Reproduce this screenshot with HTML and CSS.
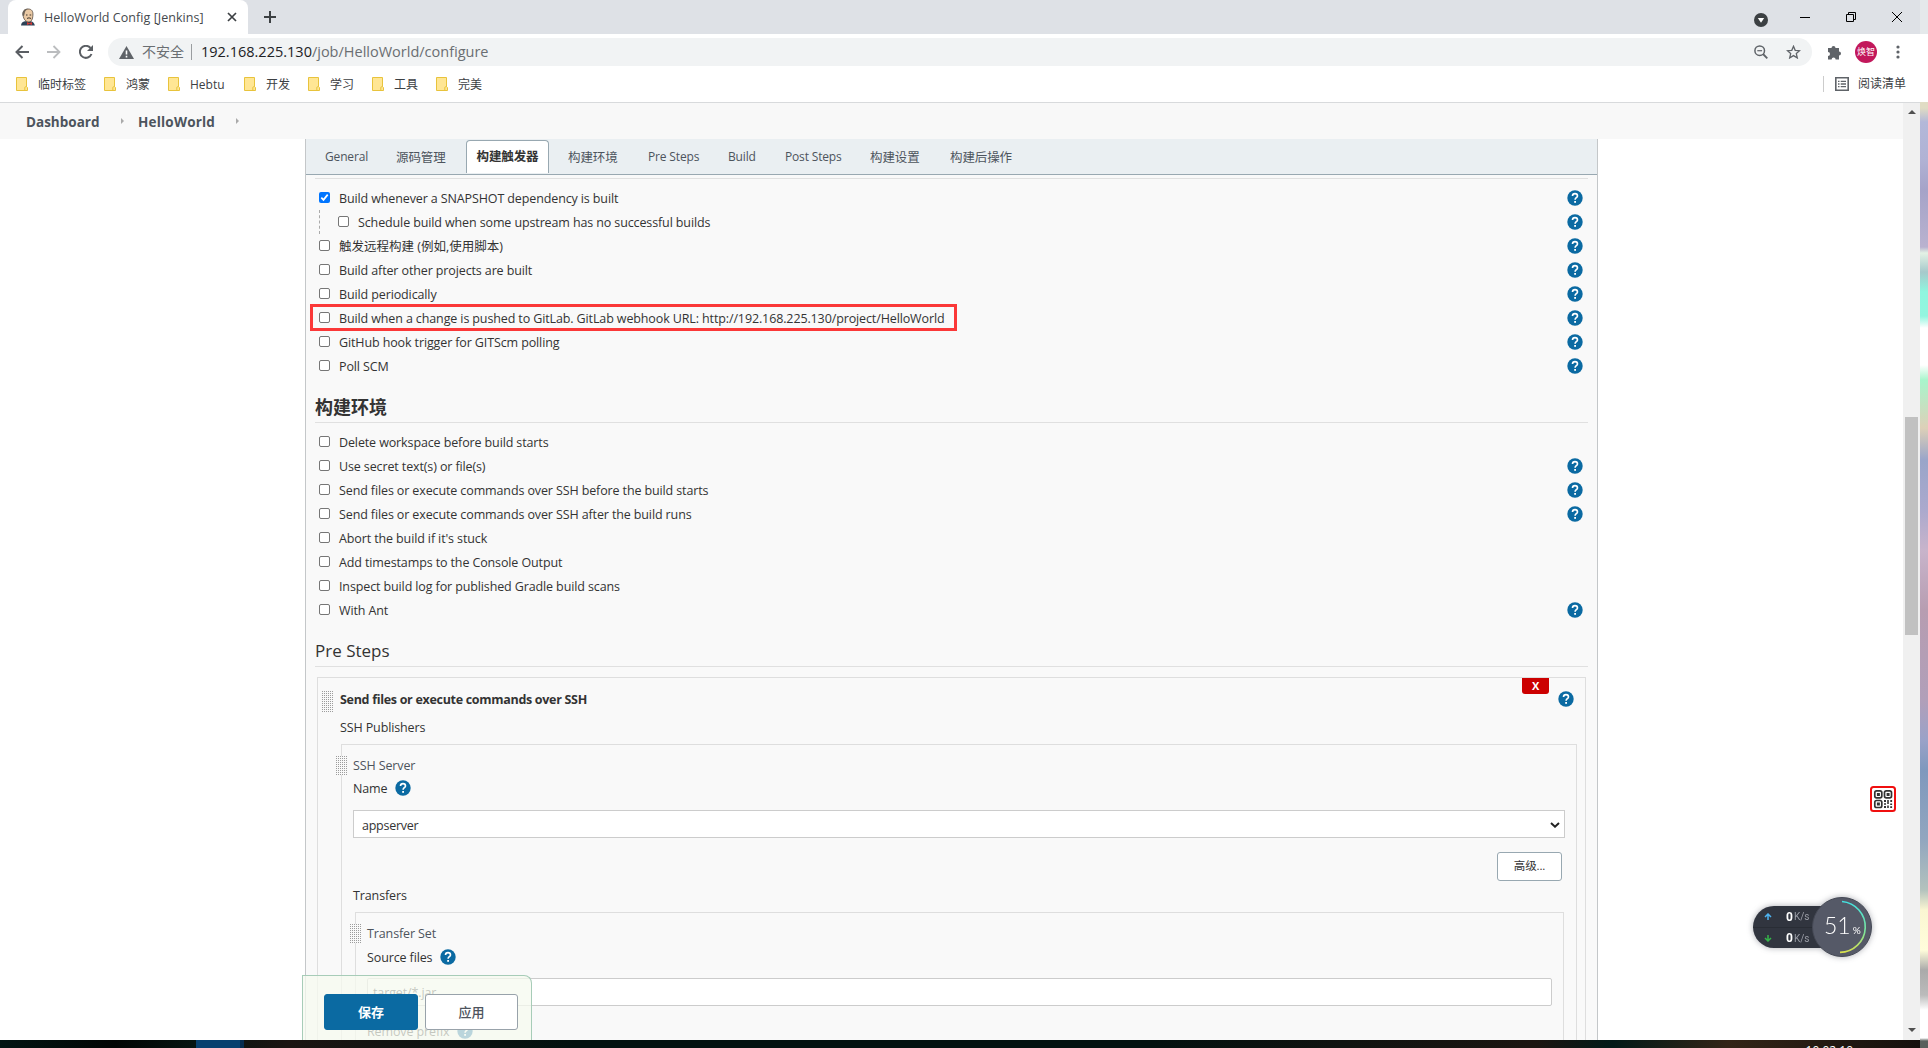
FILE: index.html
```html
<!DOCTYPE html>
<html lang="zh-CN">
<head>
    <meta charset="UTF-8">
    <title>HelloWorld Config [Jenkins]</title>
    <link rel="stylesheet" href="styles.css">
</head>
<body>

    <!-- shared icons -->
    <svg class="defs" width="0" height="0">
        <symbol id="help" viewBox="0 0 16 16">
            <circle cx="8" cy="8" r="7.7" fill="#0b6aa2"/>
            <path d="M5.5 6.1C5.5 4.6 6.6 3.6 8 3.6s2.5.9 2.5 2.3c0 1.8-2.4 1.9-2.4 3.8" fill="none" stroke="#fff" stroke-width="1.6"/>
            <rect x="7.2" y="11" width="1.8" height="1.8" fill="#fff"/>
        </symbol>
        <symbol id="folder" viewBox="0 0 12 14">
            <path d="M.5.5h10v9.2l1 .8v3H.5z" fill="#ffe694" stroke="#e8c33c"/>
            <path d="M8.8 13.3v-3l1.7-1" fill="none" stroke="#e8c33c"/>
        </symbol>
    </svg>

    <div class="window">
        <div class="tabstrip">
            <div class="browser-tab">
                <svg class="favicon" width="16" height="18" viewBox="0 0 16 18">
                    <path d="M1 17.500c.2-3 1.600-4 4-4.300h6c2 .5 3.500 1.800 3.800 4.300z" fill="#2d4257"/>
                    <path d="M3 7C2.600 3 4.600 1 8 1c3.800 0 5.200 2.300 4.900 6.200-.2 4-1.500 6.600-4 6.800C5.800 14 3.600 11.500 3 7z" fill="#eac9a4" stroke="#54483e" stroke-width=".8"/>
                    <path d="M2.600 7.500C2 3.500 4 .7 8 .7 6 2 5 3 4.700 5.300L4 8z" fill="#6b6259"/>
                    <path d="M6 7h1.500M9.600 7h1.600M7 10.500c1.300-.8 2.600-.8 4 0" stroke="#3c342e" fill="none"/>
                    <path d="M7 14l2.300 1.200L12 14v3l-2.700-1L7 17z" fill="#d33833"/>
                </svg>
                <span class="tab-title">HelloWorld Config [Jenkins]</span>
                <svg width="10" height="10" viewBox="0 0 10 10"><path d="M1 1l8 8M9 1L1 9" stroke="#3c4043" stroke-width="1.700"/></svg>
            </div>
            <svg class="new-tab" width="12" height="12" viewBox="0 0 12 12"><path d="M6 0v12M0 6h12" stroke="#3c4043" stroke-width="2"/></svg>
            <div class="window-buttons">
                <svg class="down-badge" width="14" height="14" viewBox="0 0 14 14"><circle cx="7" cy="7" r="7" fill="#3c4043"/><path d="M3.800 5h6.400L7 9.800z" fill="#fff"/></svg>
                <svg width="10" height="10" viewBox="0 0 10 10"><path d="M0 5.500h10" stroke="#000"/></svg>
                <svg width="10" height="10" viewBox="0 0 10 10"><path d="M.5 2.500h7v7h-7zM2.500 2.500v-2h7v7h-2" fill="none" stroke="#000"/></svg>
                <svg width="10" height="10" viewBox="0 0 10 10"><path d="M0 0l10 10M10 0L0 10" stroke="#000"/></svg>
            </div>
        </div>

        <div class="toolbar">
            <div class="nav">
                <svg width="14" height="14" viewBox="0 0 14 14"><path d="M14 7H1.500M7.500 1L1.500 7l6 6" fill="none" stroke="#5a5e63" stroke-width="2"/></svg>
                <svg width="14" height="14" viewBox="0 0 14 14"><path d="M0 7h12.500M6.500 1l6 6-6 6" fill="none" stroke="#bbbdbf" stroke-width="1.800"/></svg>
                <svg width="14" height="14" viewBox="0 0 14 14"><path d="M12.500 9A6 6 0 1 1 11.500 3" fill="none" stroke="#5a5e63" stroke-width="2"/><path d="M14 0v6H8z" fill="#5a5e63"/></svg>
            </div>
            <div class="address">
                <svg width="15" height="13" viewBox="0 0 15 13"><path d="M7.500 0L15 13H0z" fill="#5f6368"/><path d="M7.500 4.500v4M7.500 9.800v1.600" stroke="#fff" stroke-width="1.600"/></svg>
                <span class="insecure">不安全</span>
                <span class="url"><b>192.168.225.130</b>/job/HelloWorld/configure</span>
                <svg class="magnifier" width="14" height="14" viewBox="0 0 14 14"><circle cx="5.700" cy="5.700" r="4.800" fill="none" stroke="#5f6368" stroke-width="1.500"/><path d="M3.300 5.700h4.800" stroke="#5f6368" stroke-width="1.200"/><path d="M9 9l4.300 4.300" stroke="#5f6368" stroke-width="1.800"/></svg>
                <svg width="15" height="14" viewBox="0 0 15 14"><path d="M7.500 1.300l1.700 4 4.400.4-3.300 2.900 1 4.300-3.800-2.300-3.800 2.300 1-4.300L1.400 5.700l4.400-.4z" fill="none" stroke="#5f6368" stroke-width="1.300"/></svg>
            </div>
            <svg class="puzzle" width="15" height="15" viewBox="0 0 15 15"><path d="M1 3h3.500a2 2 0 0 1 4 0H12v3.500a2 2 0 0 1 0 4V14.500H8.600a2 2 0 0 0-4 0H1V11a2 2 0 0 0 0-4z" fill="#5f6368"/></svg>
            <span class="avatar">焕智</span>
            <svg width="4" height="14" viewBox="0 0 4 14"><g fill="#5f6368"><circle cx="2" cy="2" r="1.600"/><circle cx="2" cy="7" r="1.600"/><circle cx="2" cy="12" r="1.600"/></g></svg>
        </div>

        <div class="bookmarks">
            <span class="bookmark w1"><svg width="12" height="14"><use href="#folder"/></svg>临时标签</span>
            <span class="bookmark"><svg width="12" height="14"><use href="#folder"/></svg>鸿蒙</span>
            <span class="bookmark w2"><svg width="12" height="14"><use href="#folder"/></svg>Hebtu</span>
            <span class="bookmark"><svg width="12" height="14"><use href="#folder"/></svg>开发</span>
            <span class="bookmark"><svg width="12" height="14"><use href="#folder"/></svg>学习</span>
            <span class="bookmark"><svg width="12" height="14"><use href="#folder"/></svg>工具</span>
            <span class="bookmark"><svg width="12" height="14"><use href="#folder"/></svg>完美</span>
            <span class="reading-list">
                <svg width="14" height="14" viewBox="0 0 14 14"><path d="M.8.8h12.400v12.400H.8z" fill="none" stroke="#5f6368" stroke-width="1.600"/><path d="M3 4.300h1.500M3 7h1.500M3 9.700h1.500M5.700 4.300H11M5.700 7H11M5.700 9.700H11" stroke="#5f6368" stroke-width="1.300"/></svg>
                阅读清单
            </span>
        </div>

        <div class="viewport">
            <div class="page">
                <div class="breadcrumbs">
                    <span class="crumb c1">Dashboard</span><i class="arrow"></i>
                    <span class="crumb c2">HelloWorld</span><i class="arrow"></i>
                </div>

                <div class="config">
                    <div class="tabs">
                        <span class="tab t1">General</span>
                        <span class="tab t2">源码管理</span>
                        <span class="tab active">构建触发器</span>
                        <span class="tab t4">构建环境</span>
                        <span class="tab t5">Pre Steps</span>
                        <span class="tab t6">Build</span>
                        <span class="tab t7">Post Steps</span>
                        <span class="tab t8">构建设置</span>
                        <span class="tab">构建后操作</span>
                    </div>
                    <div class="rule"></div>

                    <div class="rows">
                        <div class="row"><i class="check on"><svg width="11" height="11" viewBox="0 0 11 11"><path d="M2.300 5.600l2.200 2.300 4.200-5.300" fill="none" stroke="#fff" stroke-width="1.700"/></svg></i><span>Build whenever a SNAPSHOT dependency is built</span><svg class="help"><use href="#help"/></svg></div>
                        <div class="row nested"><i class="check"></i><span>Schedule build when some upstream has no successful builds</span><svg class="help"><use href="#help"/></svg></div>
                        <div class="row"><i class="check"></i><span class="cjk">触发远程构建 (例如,使用脚本)</span><svg class="help"><use href="#help"/></svg></div>
                        <div class="row"><i class="check"></i><span>Build after other projects are built</span><svg class="help"><use href="#help"/></svg></div>
                        <div class="row"><i class="check"></i><span>Build periodically</span><svg class="help"><use href="#help"/></svg></div>
                        <div class="row marked"><i class="check"></i><span>Build when a change is pushed to GitLab. GitLab webhook URL: http://192.168.225.130/project/HelloWorld</span><svg class="help"><use href="#help"/></svg></div>
                        <div class="row"><i class="check"></i><span>GitHub hook trigger for GITScm polling</span><svg class="help"><use href="#help"/></svg></div>
                        <div class="row"><i class="check"></i><span>Poll SCM</span><svg class="help"><use href="#help"/></svg></div>
                    </div>

                    <h2 class="cjk-title">构建环境</h2>
                    <div class="rows">
                        <div class="row"><i class="check"></i><span>Delete workspace before build starts</span></div>
                        <div class="row"><i class="check"></i><span>Use secret text(s) or file(s)</span><svg class="help"><use href="#help"/></svg></div>
                        <div class="row"><i class="check"></i><span>Send files or execute commands over SSH before the build starts</span><svg class="help"><use href="#help"/></svg></div>
                        <div class="row"><i class="check"></i><span>Send files or execute commands over SSH after the build runs</span><svg class="help"><use href="#help"/></svg></div>
                        <div class="row"><i class="check"></i><span>Abort the build if it's stuck</span></div>
                        <div class="row"><i class="check"></i><span>Add timestamps to the Console Output</span></div>
                        <div class="row"><i class="check"></i><span>Inspect build log for published Gradle build scans</span></div>
                        <div class="row"><i class="check"></i><span>With Ant</span><svg class="help"><use href="#help"/></svg></div>
                    </div>

                    <h2>Pre Steps</h2>
                    <div class="chunk step">
                        <i class="grip"></i>
                        <span class="delete">X</span>
                        <div class="step-title">Send files or execute commands over SSH<svg class="help"><use href="#help"/></svg></div>
                        <div class="label publishers">SSH Publishers</div>
                        <div class="chunk server">
                            <i class="grip"></i>
                            <div class="label light">SSH Server</div>
                            <div class="label name">Name<svg class="help"><use href="#help"/></svg></div>
                            <div class="select">appserver<svg width="10" height="6" viewBox="0 0 10 6"><path d="M1 1l4 3.700L9 1" fill="none" stroke="#222" stroke-width="2"/></svg></div>
                            <div class="advanced">高级...</div>
                            <div class="label transfers">Transfers</div>
                            <div class="chunk transfer">
                                <i class="grip"></i>
                                <div class="label light">Transfer Set</div>
                                <div class="label source">Source files<svg class="help"><use href="#help"/></svg></div>
                                <div class="input">target/*.jar</div>
                                <div class="label">Remove prefix<svg class="help"><use href="#help"/></svg></div>
                            </div>
                        </div>
                    </div>
                </div>

                <div class="save-bar">
                    <span class="button primary">保存</span>
                    <span class="button">应用</span>
                </div>
            </div>
            <div class="scrollbar">
                <i class="up"></i>
                <i class="thumb"></i>
                <i class="down"></i>
            </div>
        </div>
        <div class="taskbar"><i class="task"></i><span class="clock">10:02:10</span></div>
    </div>
    <div class="wallpaper"></div>

    <!-- floating desktop widgets -->
    <svg class="qr" width="26" height="26" viewBox="0 0 26 26">
        <rect x="1" y="1" width="24" height="24" rx="2.500" fill="#fff" stroke="#f00f0f" stroke-width="2"/>
        <g fill="none" stroke="#333" stroke-width="1.700">
            <rect x="4.800" y="4.800" width="7" height="7" rx="1.800"/><rect x="14.500" y="4.800" width="7" height="7" rx="1.800"/><rect x="4.800" y="14.500" width="7" height="7" rx="1.800"/>
        </g>
        <path d="M6.900 6.900h3v3h-3zM16.600 6.900h3v3h-3zM6.900 16.600h3v3h-3zM14 14h2v2h-2zM17.200 14h1.600v4h-1.600zM20.300 14h1.800v2h-1.800zM14 17.200h2v1.600h-2zM20.200 17.400h1.900v1.500h-1.900zM14 20h2v2h-2zM17.200 19.500h1.600v2.500h-1.600zM20.200 20.200h1.900v1.800h-1.900z" fill="#333"/>
    </svg>

    <div class="meter">
        <div class="speeds">
            <div class="speed"><svg width="8" height="7" viewBox="0 0 8 7"><path d="M4 7V1.500M1 4l3-3 3 3" fill="none" stroke="#4db3f0" stroke-width="1.500"/></svg><b>0</b>K/s</div>
            <div class="speed"><svg width="8" height="7" viewBox="0 0 8 7"><path d="M4 0v5.500M1 3l3 3 3-3" fill="none" stroke="#35b54a" stroke-width="1.500"/></svg><b>0</b>K/s</div>
        </div>
        <div class="gauge">
            <svg class="ring" width="60" height="60" viewBox="0 0 60 60">
                <defs><linearGradient id="arc" x1="0" y1="0" x2="0" y2="1"><stop offset="0" stop-color="#43e0e0"/><stop offset=".6" stop-color="#7fe59a"/><stop offset="1" stop-color="#d8e04e"/></linearGradient></defs>
                <path d="M30 4.500a25.500 25.500 0 0 1-2 50.900" fill="none" stroke="url(#arc)" stroke-width="1.600"/>
            </svg>
            <span class="percent">51</span><small>%</small>
        </div>
    </div>

</body>
</html>
```
FILE: styles.css
```css
* { box-sizing: border-box; }
body {
    margin: 0;
    width: 1928px;
    height: 1048px;
    display: flex;
    overflow: hidden;
    position: relative;
    background: white;
    color: #333;
    font-family: "Open Sans", "Noto Sans CJK SC", sans-serif;
    font-size: 12.5px;
    white-space: nowrap;
}
svg { flex: none; display: block; }
.defs { position: absolute; }
.window { width: 1920px; display: flex; flex-direction: column; }

/* Browser chrome */
.tabstrip {
    height: 34px;
    display: flex;
    align-items: center;
    padding-left: 8px;
    background: #dee1e6;
}
.browser-tab {
    width: 240px;
    height: 34px;
    display: flex;
    align-items: center;
    padding: 0 11px 0 12px;
    background: white;
    border-radius: 8px 8px 0 0;
    color: #45494d;
    font-size: 12.5px;
}
.tab-title { flex: 1; margin-left: 8px; letter-spacing: 0.05px; }
.new-tab { margin-left: 16px; }
.window-buttons {
    height: 28px;
    margin-left: auto;
    display: flex;
    align-items: center;
    gap: 36px;
    padding-right: 18px;
}
.down-badge { margin: 6px -4px 0 0; }
.toolbar {
    height: 36px;
    display: flex;
    align-items: center;
    padding: 0 20px 0 15px;
}
.nav { width: 93px; display: flex; gap: 18px; }
.address {
    width: 1704px;
    height: 28px;
    display: flex;
    align-items: center;
    padding: 0 11px;
    background: #f1f3f4;
    border-radius: 14px;
    font-size: 14px;
    color: #6a6e72;
}
.insecure { margin: 0 9px 0 8px; border-right: 1px solid #9a9da0; padding-right: 7px; line-height: 16px; }
.url { font-size: 14.5px; margin-bottom: 2px; }
.url b { font-weight: normal; color: #202124; }
.magnifier { margin: 0 18px 0 auto; }
.puzzle { margin-left: 15px; }
.avatar {
    width: 22px;
    height: 22px;
    margin: 0 19px 0 13px;
    border-radius: 50%;
    background: #c2185b;
    color: white;
    font-size: 9px;
    line-height: 22px;
    text-align: center;
}
.bookmarks {
    height: 33px;
    display: flex;
    align-items: center;
    padding: 0 14px 4px 16px;
    border-bottom: 1px solid #d8dadc;
    font-size: 12px;
    color: #3c4043;
}
.bookmark { width: 64px; display: flex; align-items: center; gap: 10px; }
.w1 { width: 88px; }
.w2 { width: 76px; }
.reading-list {
    display: flex;
    align-items: center;
    gap: 9px;
    margin-left: auto;
    padding-left: 11px;
    border-left: 1px solid #ccc;
    line-height: 16px;
}

/* Jenkins page */
.viewport { height: 937px; display: flex; }
.page { width: 1903px; position: relative; overflow: hidden; }
.breadcrumbs {
    height: 36px;
    display: flex;
    align-items: center;
    padding: 2px 0 0 26px;
    background: #f8f8f8;
    color: #4d545d;
    font-size: 13.5px;
    font-weight: bold;
}
.c1 { width: 95px; }
.c2 { width: 98px; margin-left: 14px; letter-spacing: 0.2px; }
.arrow { border: 3px solid transparent; border-left-color: #aaa; border-right: 0; margin-bottom: 3px; }
.config {
    width: 1293px;
    height: 920px;
    margin-left: 305px;
    background: #f9f9f9;
    border: solid #c4c7c9;
    border-width: 0 1px;
    letter-spacing: -0.12px;
}
.tabs {
    height: 36px;
    display: flex;
    align-items: center;
    padding: 0 0 1px 19px;
    background: #eaeff2;
    border-bottom: 1px solid #98a8b1;
    color: #4d545d;
}
.t1, .t5, .t6, .t7 { font-size: 12px; letter-spacing: -0.16px; padding-top: 1px; }
.t1 { width: 71px; }
.t2 { width: 70px; }
.active {
    width: 83px;
    height: 33px;
    align-self: flex-end;
    margin-right: 19px;
    background: white;
    border: 1px solid #98a8b1;
    border-bottom: 0;
    border-radius: 4px 4px 0 0;
    line-height: 31px;
    text-align: center;
    font-weight: bold;
    color: #333;
}
.t4 { width: 80px; }
.t5 { width: 80px; }
.t6 { width: 57px; }
.t7 { width: 85px; }
.t8 { width: 80px; }
.rule { height: 4px; margin: 0 9px; border-bottom: 1px solid #e0e0e0; }
.rows { padding: 7px 14px 0 13px; }
.row { height: 24px; display: flex; align-items: center; }
.row span { margin-left: 9px; }
.row .cjk { margin-bottom: 2px; letter-spacing: 0; }
.help { width: 16px; height: 16px; }
.row .help { margin-left: auto; }
.nested { padding-left: 18px; border-left: 1px dashed #aaa; }
.check {
    width: 11px;
    height: 11px;
    margin-bottom: 2px;
    background: white;
    border: 1px solid #767676;
    border-radius: 2px;
}
.on { border: 0; background: #0075ff; }
.marked { position: relative; }
.marked::before {
    content: "";
    position: absolute;
    left: -9px;
    top: -2px;
    width: 641px;
    height: 21px;
    border: 3px solid #fb3838;
}
h2 {
    height: 45px;
    margin: 0 9px;
    padding-top: 14px;
    border-bottom: 1px solid #e0e0e0;
    font-size: 17px;
    line-height: 30px;
    font-weight: normal;
    letter-spacing: 0;
}
.cjk-title { font-size: 18px; font-weight: bold; }
.chunk { position: relative; border: 1px solid #dedede; }
.step { height: 400px; margin: 10px 11px 0; padding: 9px 8px 0 22px; }
.step-title {
    height: 24px;
    display: flex;
    align-items: center;
    justify-content: space-between;
    padding-right: 3px;
    font-weight: bold;
    letter-spacing: -0.3px;
}
.label { height: 20px; display: flex; align-items: center; gap: 8px; }
.light { color: #4d545d; }
.publishers { margin: 6px 0 7px; }
.server { height: 330px; margin-left: 1px; padding: 10px 11px 0 11px; }
.name { margin: 3px 0 12px; }
.select {
    height: 28px;
    display: flex;
    align-items: center;
    justify-content: space-between;
    padding: 2px 4px 0 8px;
    background: white;
    border: 1px solid #ccc;
    letter-spacing: -0.25px;
}
.advanced {
    width: 65px;
    height: 29px;
    margin: 14px 3px 4px auto;
    background: white;
    border: 1px solid #98a8b1;
    border-radius: 3px;
    font-size: 11.5px;
    line-height: 26px;
    text-align: center;
}
.transfers { margin-bottom: 7px; }
.transfer { height: 160px; margin: 0 1px 0 2px; padding: 10px 11px 0; }
.source { margin: 4px 0 11px; }
.input {
    height: 28px;
    margin-bottom: 15px;
    padding: 0 5px;
    background: white;
    border: 1px solid #ccc;
    border-radius: 2px;
    line-height: 27px;
}
.grip {
    position: absolute;
    left: -6px;
    top: 11px;
    width: 11px;
    height: 19px;
    background: repeating-linear-gradient(90deg, transparent 0 1px, #f9f9f9 1px 2px), repeating-linear-gradient(#9c9c9c 0 1px, #f9f9f9 1px 2px);
}
.step > .grip { left: 4px; top: 13px; height: 22px; }
.delete {
    position: absolute;
    left: 1204px;
    top: 0;
    width: 27px;
    height: 16px;
    background: #c00;
    border-radius: 0 0 3px 3px;
    color: white;
    font-size: 11px;
    font-weight: bold;
    line-height: 15px;
    text-align: center;
}
.save-bar {
    position: absolute;
    left: 302px;
    bottom: 0;
    width: 230px;
    height: 65px;
    display: flex;
    gap: 7px;
    padding: 18px 0 0 21px;
    background: rgba(245, 249, 239, 0.75);
    border: 1px solid #a7ccb8;
    border-bottom: 0;
    border-radius: 0 8px 0 0;
    font-size: 13px;
}
.button {
    width: 93px;
    height: 36px;
    background: white;
    border: 1px solid #98a2aa;
    border-radius: 3px;
    color: #4d545d;
    font-weight: 500;
    line-height: 34px;
    text-align: center;
}
.primary { width: 94px; background: #0b6aa2; border-color: #0b6aa2; color: white; font-weight: bold; }
.scrollbar {
    width: 17px;
    display: flex;
    flex-direction: column;
    align-items: center;
    padding: 7px 0 8px;
    background: #f0f0f0;
}
.up { border: 4px solid transparent; border-top: 0; border-bottom-color: #505050; }
.thumb { width: 13px; height: 218px; margin: 303px 0 auto; background: #c1c1c1; }
.down { border: 4px solid transparent; border-bottom: 0; border-top-color: #505050; }

/* Desktop around the window */
.taskbar {
    height: 8px;
    display: flex;
    justify-content: space-between;
    padding: 0 67px 0 196px;
    overflow: hidden;
    background: linear-gradient(90deg, #021513, #010504 6%, #051411 10%, #1b1512 15%, #02110f 30%, #02110f 60%, #1c1511 80%, #021a18 84%, #332417 90%, #15100d);
}
.task { width: 48px; background: #07406f; border-right: 4px solid #052d50; }
.clock { color: white; font-size: 12px; line-height: 16px; padding-top: 3px; }
.wallpaper {
    width: 8px;
    background:
        linear-gradient(#e5e9eb 0 34px, white 34px 102px, transparent 102px),
        linear-gradient(#e0dcc4 108px, #b3b8d9 122px, #b0b2d4 160px, #a5a3c8 190px, #b9b2cf 247px, #e3f2e5 253px, #a6c9cb 272px, #8ff6df 292px, #93f5df 316px, white 328px, white 365px, #a8f5cc 380px, #ddd0b8 428px, #9aa5c9 460px, #aba9cd 510px, #c8b4cb 550px, #b79db1 610px, #b19fb9 700px, #9aa2c8 740px, #7f98bd 770px, #92a6bf 840px, #b3c2bd 890px, #faf6d2 910px, #fffddb 950px, #aaa 970px, #bbb 995px, white 1010px, white 1038px, #59605d 1041px);
}
.qr { position: absolute; left: 1870px; top: 786px; }
.meter {
    position: absolute;
    left: 1753px;
    top: 897px;
    display: flex;
    align-items: center;
    filter: drop-shadow(0 0 3px rgba(50, 55, 70, 0.4));
}
.speeds {
    width: 85px;
    height: 42px;
    border-radius: 21px 0 0 21px;
    background: #31353f;
}
.speed {
    height: 21px;
    display: flex;
    align-items: center;
    padding-left: 11px;
    color: #9a9da6;
    font-family: Roboto, sans-serif;
    font-size: 10px;
}
.speed + .speed { border-top: 1px solid #292d35; }
.speed b { margin: 0 1px 0 14px; color: white; font-size: 12px; }
.gauge {
    width: 60px;
    height: 60px;
    margin-left: -26px;
    position: relative;
    display: flex;
    align-items: baseline;
    padding: 13px 0 0 11px;
    border-radius: 50%;
    background: #555967;
    border: 1px solid #454955;
    color: white;
    font-family: Lato, sans-serif;
}
.percent { font-size: 23px; font-weight: 300; }
.gauge small { font-size: 10px; margin-left: 2px; }
.ring { position: absolute; left: -1px; top: -1px; }
```
